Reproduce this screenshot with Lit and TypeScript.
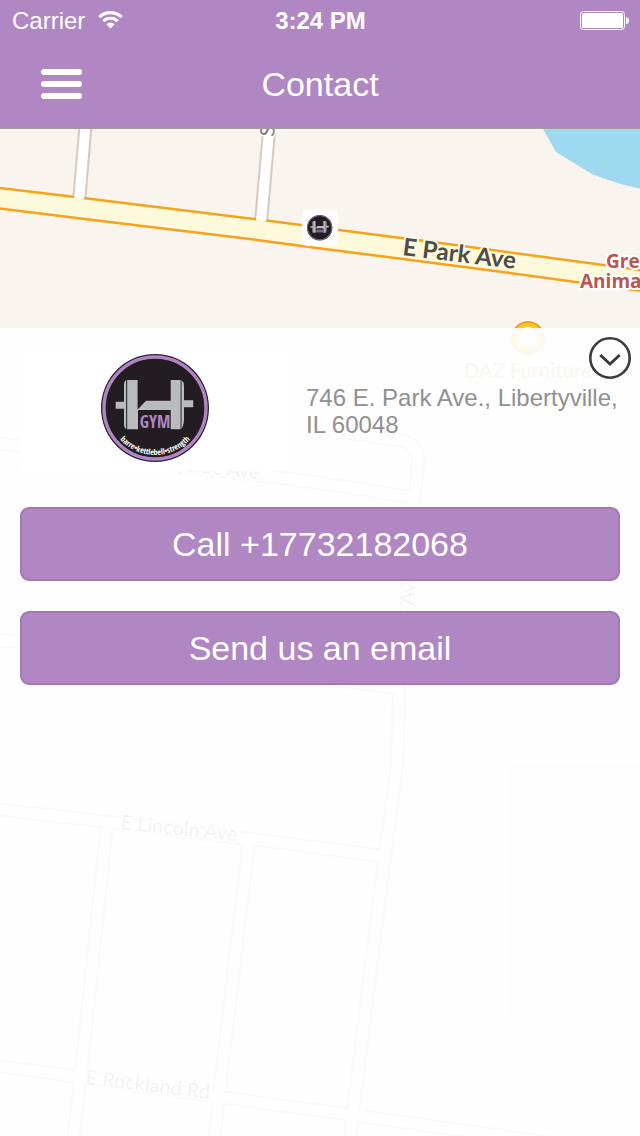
import { LitElement, html, css, svg } from "lit";
import { customElement, property } from "lit/decorators.js";

const STREETS = [
  "M86 120 L79 202",
  "M270 120 L261 222",
  "M-10 442 L20 446 L290 479 L320 483 L411 497",
  "M340 432 L398 440 Q420 444 418 464 L414 506 L407 600 L399 686 L398 740 L396 772 L385 855 L353 1112 L349 1150",
  "M-10 639 L200 663 L399 688",
  "M-10 808 L107 822 L250 839 L384 856",
  "M107 824 L81 1074 L72 1150",
  "M249 840 L219 1096 L213 1150",
  "M-10 1065 L80 1077 L219 1097 L353 1115 L660 1158",
];

const PARK_AVE = "M-10 197 L80 208 L260 230 L320 238 L460 256 L660 283";

const emblem = svg`
  <circle cx="54" cy="54" r="54" fill="#2b2030"/>
  <circle cx="54" cy="54" r="51" fill="none" stroke="#af86c2" stroke-width="3.4"/>
  <circle cx="54" cy="54" r="49" fill="#231d21"/>
  <g fill="#b9bbbd">
    <path d="M14.700 47.700H23V31Q23 27 25.200 26V75Q23 74 23 70V54.700H14.700Z"/>
    <path d="M26.200 26H36.600V55.500L45 46.700H69.700V26H79.600V75.300H69.700V56H37V75.300H26.200Z"/>
    <path d="M80.500 26Q83 28 83 32V46.200H92.200V53.200H83V66Q82.600 72 80.500 75Z"/>
  </g>`;

@customElement("gym-logo")
export class GymLogo extends LitElement {
  static styles = css`
    :host { display: block; }
    svg { display: block; width: 100%; height: auto; }
    text { font-family: "Open Sans Condensed", "Roboto", sans-serif; font-weight: 300; }
    .name { font-size: 17px; fill: #af86c2; }
    .motto { font-size: 8px; fill: #fff; }
  `;

  render() {
    return html`
      <svg viewBox="0 0 108 108" role="img" aria-label="H Gym">
        ${emblem}
        <text class="name" x="54" y="74" text-anchor="middle">GYM</text>
        <defs><path id="arc" d="M7 54A47 47 0 0 0 101 54"/></defs>
        <text class="motto" text-anchor="middle"><textPath href="#arc" startOffset="50%">barre•kettlebell•strength</textPath></text>
      </svg>`;
  }
}

@customElement("street-map")
export class StreetMap extends LitElement {
  static styles = css`
    :host { display: block; overflow: hidden; background: #f9f4ed; }
    svg { display: block; width: 100%; height: 100%; }
    .casing { fill: none; stroke: #d3cac0; stroke-width: 14; }
    .street { fill: none; stroke: #fff; stroke-width: 10; }
    .avenue-casing { fill: none; stroke: #f6a21a; stroke-width: 23; }
    .avenue { fill: none; stroke: #fcfadb; stroke-width: 18; }
    text { font-family: "Lato", sans-serif; paint-order: stroke; stroke: #fff; stroke-linejoin: round; }
    .label { font-size: 20px; fill: #777; stroke-width: 3px; }
    .main-label { font-size: 24px; font-weight: 700; fill: #4c4c4a; stroke: #fcfadb; stroke-width: 4px; }
    .place { font-family: "Open Sans", sans-serif; font-size: 19px; font-weight: 700; fill: #bb5653; stroke-width: 4px; }
    .shop { font-size: 20px; font-weight: 700; fill: #d8a45c; stroke-width: 3px; }
  `;

  render() {
    return html`
      <svg viewBox="0 129 640 1007" preserveAspectRatio="xMidYMin slice" role="img" aria-label="Map of E Park Ave">
        <path d="M542 127L556 152L592 174Q616 184 650 191V127Z" fill="#9fd9f0"/>
        ${STREETS.map((d) => svg`<path class="casing" d=${d}/>`)}
        ${STREETS.map((d) => svg`<path class="street" d=${d}/>`)}
        <path class="avenue-casing" d=${PARK_AVE}/>
        <path class="avenue" d=${PARK_AVE}/>
        <path class="street" d="M79.500 195L79 199M261.500 217L261 221"/>
        <text class="label" transform="translate(274 137) rotate(-85)">S</text>
        <text class="main-label" transform="translate(402 255) rotate(7)">E Park Ave</text>
        <text class="place" x="606" y="268">Gre</text>
        <text class="place" x="580" y="288">Anima</text>
        <text class="label" transform="translate(133 466) rotate(6)">Sunnyside Ave</text>
        <text class="label" transform="translate(412 632) rotate(-86)">de Ave</text>
        <text class="label" transform="translate(120 829) rotate(6)">E Lincoln Ave</text>
        <text class="label" transform="translate(85 1084) rotate(7)">E Rockland Rd</text>
        <circle cx="528" cy="338" r="18" fill="#fff"/>
        <circle cx="528" cy="338" r="17" fill="#f0a020"/>
        <circle cx="528" cy="338" r="15" fill="#ffc61c"/>
        <path d="M519 332H523V330Q523 327 528 327T533 330V332H537V346H519Z" fill="#fff"/>
        <path d="M525 332V330H531V332Z" fill="#ffc61c"/>
        <text class="shop" x="528" y="378" text-anchor="middle">DAZ Furniture</text>
        <rect x="302" y="210" width="36" height="36" rx="6" fill="#fff"/>
        <g transform="translate(307 215) scale(0.235)">${emblem}
          <rect x="39" y="62" width="31" height="12" fill="#80628f"/>
        </g>
      </svg>`;
  }
}

@customElement("status-bar")
export class StatusBar extends LitElement {
  @property() carrier = "";
  @property() time = "";

  static styles = css`
    :host {
      display: grid;
      grid-template-columns: 1fr auto 1fr;
      align-items: center;
      height: 40px;
      padding: 0 11px 0 12px;
      font-size: 24px;
      line-height: 42px;
    }
    .signal { display: flex; align-items: center; gap: 13px; }
    .time { font-weight: 700; }
    .battery { justify-self: end; }
    svg { display: block; margin-bottom: 2px; }
  `;

  render() {
    return html`
      <span class="signal">
        ${this.carrier}
        <svg width="25" height="18" viewBox="0 0 25 18" aria-label="Wi-Fi">
          <g fill="none" stroke="#fff" stroke-width="3.200">
            <path d="M1.300 6.200A16 16 0 0 1 23.700 6.200"/>
            <path d="M5.300 10.200A10.300 10.300 0 0 1 19.700 10.200"/>
          </g>
          <path d="M8.300 13.300A6 6 0 0 1 16.700 13.300L12.500 17.600Z" fill="#fff"/>
        </svg>
      </span>
      <span class="time">${this.time}</span>
      <svg class="battery" width="49" height="19" viewBox="0 0 49 19" aria-label="Battery full">
        <rect x="0.500" y="0.500" width="44" height="18" rx="3" fill="none" stroke="#fff"/>
        <rect x="2" y="2" width="41" height="15" rx="1.500" fill="#fff"/>
        <path d="M46 6Q49 6.500 49 9.500T46 13Z" fill="#fff"/>
      </svg>`;
  }
}

@customElement("app-root")
export class AppRoot extends LitElement {
  @property() phone = "+17732182068";
  @property() address = "746 E. Park Ave., Libertyville, IL 60048";

  static styles = css`
    :host {
      display: flex;
      flex-direction: column;
      min-height: 100vh;
      font-family: "Liberation Sans", Arial, sans-serif;
      color: #fff;
    }
    * { box-sizing: border-box; }
    header { background: #b087c2; border-bottom: 1px solid #a59a9e; }
    .nav {
      display: grid;
      grid-template-columns: 1fr auto 1fr;
      align-items: center;
      height: 88px;
      padding: 0 40px;
    }
    h1 { margin: 0; font-size: 34px; font-weight: 400; line-height: 40px; }
    button { padding: 0; border: 0; background: none; cursor: pointer; }
    button svg { display: block; }
    .menu { justify-self: start; }
    main { flex: 1; display: grid; grid-template-rows: 199px 1fr; grid-template-columns: 100%; }
    street-map { grid-area: 1 / 1 / 3 / 2; height: 0; min-height: 100%; }
    .panel {
      grid-area: 2 / 1;
      position: relative;
      padding: 20px;
      background: rgba(254, 254, 255, 0.92);
    }
    .details { display: grid; grid-template-columns: 45% 1fr; column-gap: 16px; }
    .logo { display: flex; justify-content: center; padding: 6px 0 9px; background: #fff; }
    gym-logo { width: 108px; }
    address { padding-top: 36px; font-style: normal; font-size: 24px; line-height: 27px; color: #909090; }
    .toggle { position: absolute; top: 9px; right: 9px; }
    .actions { display: grid; gap: 30px; margin-top: 36px; }
    .actions a {
      padding: 15px;
      border: 2px solid #a378b5;
      border-radius: 9px;
      background: #b087c2;
      color: #fff;
      font-size: 34px;
      line-height: 40px;
      text-align: center;
      text-decoration: none;
    }
  `;

  render() {
    return html`
      <header>
        <status-bar carrier="Carrier" time="3:24 PM"></status-bar>
        <div class="nav">
          <button class="menu" aria-label="Menu">
            <svg width="43" height="30" viewBox="0 0 43 30" fill="#fff">
              <rect x="1" width="41" height="6" rx="3"/>
              <rect x="1" y="12" width="41" height="6" rx="3"/>
              <rect x="1" y="24" width="41" height="6" rx="3"/>
            </svg>
          </button>
          <h1>Contact</h1>
        </div>
      </header>
      <main>
        <street-map></street-map>
        <section class="panel">
          <div class="details">
            <div class="logo"><gym-logo></gym-logo></div>
            <address>${this.address}</address>
          </div>
          <button class="toggle" aria-label="Hide details">
            <svg width="42" height="42" viewBox="0 0 42 42" fill="none" stroke="#3b3b3b">
              <circle cx="21" cy="21" r="19.700" stroke-width="2.600"/>
              <path d="M11.300 18L21 27L30.700 18" stroke-width="3"/>
            </svg>
          </button>
          <nav class="actions">
            <a href="tel:${this.phone}">Call ${this.phone}</a>
            <a href="mailto:">Send us an email</a>
          </nav>
        </section>
      </main>`;
  }
}
